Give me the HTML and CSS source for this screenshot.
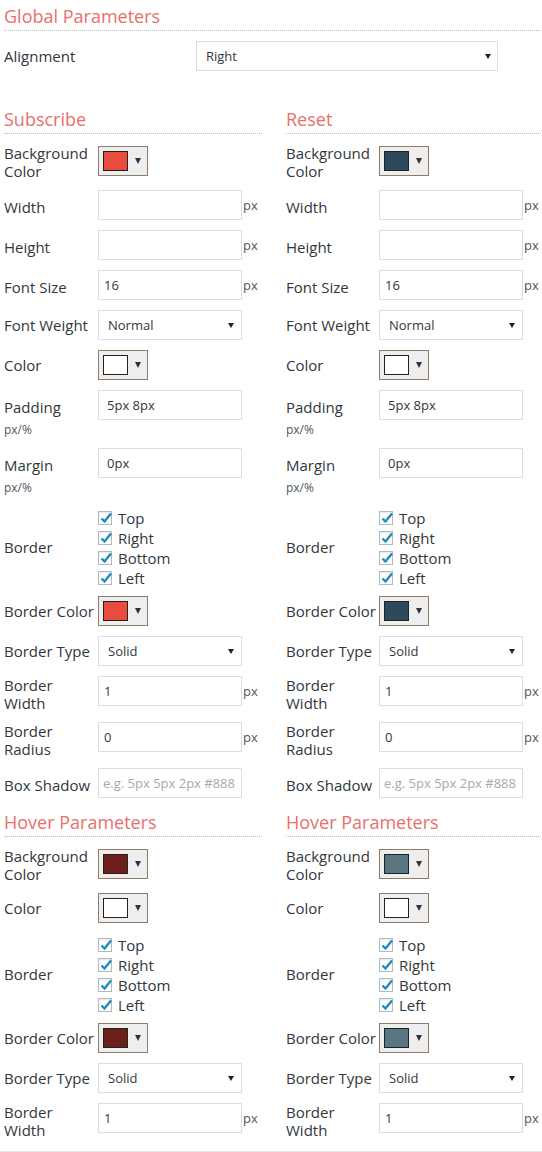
FILE: index.html
```html
<!DOCTYPE html>
<html lang="en">
<head>
    <meta charset="UTF-8">
    <meta name="viewport" content="width=device-width, initial-scale=1.0">
    <title>Button Settings</title>
    <link rel="stylesheet" href="styles.css">
</head>
<body>
    <div class="page">
        <h3 class="section-title">Global Parameters</h3>
        <div class="row global-row">
            <label class="label" for="alignment">Alignment</label>
            <div class="select-wrap wide">
                <select id="alignment" class="field select">
                    <option>Right</option>
                    <option>Left</option>
                    <option>Center</option>
                </select>
            </div>
        </div>

        <div class="columns">
            <!-- Subscribe button -->
            <div class="col">
                <h3 class="section-title">Subscribe</h3>

                <div class="row">
                    <div class="label two">Background<br>Color</div>
                    <button class="color-btn" type="button"><span class="swatch red"></span><span class="caret"></span></button>
                </div>
                <div class="row text-row">
                    <label class="label">Width</label>
                    <input class="field" type="text">
                    <span class="unit">px</span>
                </div>
                <div class="row text-row">
                    <label class="label">Height</label>
                    <input class="field" type="text">
                    <span class="unit">px</span>
                </div>
                <div class="row text-row">
                    <label class="label">Font Size</label>
                    <input class="field" type="text" value="16">
                    <span class="unit">px</span>
                </div>
                <div class="row">
                    <label class="label">Font Weight</label>
                    <div class="select-wrap">
                        <select class="field select">
                            <option>Normal</option>
                            <option>Bold</option>
                        </select>
                    </div>
                </div>
                <div class="row">
                    <div class="label">Color</div>
                    <button class="color-btn" type="button"><span class="swatch white"></span><span class="caret"></span></button>
                </div>
                <div class="row text-row">
                    <label class="label">Padding<small class="note">px/%</small></label>
                    <input class="field spaced" type="text" value="5px 8px">
                </div>
                <div class="row text-row">
                    <label class="label">Margin<small class="note">px/%</small></label>
                    <input class="field spaced" type="text" value="0px">
                </div>
                <div class="row checks-row">
                    <div class="label">Border</div>
                    <div class="checks">
                        <label class="check"><span class="box"><svg width="16" height="16" viewBox="0 0 16 16"><path d="M3.5 8.5 L6.5 11.5 L13 3.5" fill="none" stroke="#1e8cbe" stroke-width="2.4"/></svg></span>Top</label>
                        <label class="check"><span class="box"><svg width="16" height="16" viewBox="0 0 16 16"><path d="M3.5 8.5 L6.5 11.5 L13 3.5" fill="none" stroke="#1e8cbe" stroke-width="2.4"/></svg></span>Right</label>
                        <label class="check"><span class="box"><svg width="16" height="16" viewBox="0 0 16 16"><path d="M3.5 8.5 L6.5 11.5 L13 3.5" fill="none" stroke="#1e8cbe" stroke-width="2.4"/></svg></span>Bottom</label>
                        <label class="check"><span class="box"><svg width="16" height="16" viewBox="0 0 16 16"><path d="M3.5 8.5 L6.5 11.5 L13 3.5" fill="none" stroke="#1e8cbe" stroke-width="2.4"/></svg></span>Left</label>
                    </div>
                </div>
                <div class="row">
                    <div class="label">Border Color</div>
                    <button class="color-btn" type="button"><span class="swatch red"></span><span class="caret"></span></button>
                </div>
                <div class="row">
                    <label class="label">Border Type</label>
                    <div class="select-wrap">
                        <select class="field select">
                            <option>Solid</option>
                            <option>Dashed</option>
                            <option>Dotted</option>
                        </select>
                    </div>
                </div>
                <div class="row text-row">
                    <label class="label two">Border<br>Width</label>
                    <input class="field" type="text" value="1">
                    <span class="unit">px</span>
                </div>
                <div class="row text-row">
                    <label class="label two">Border<br>Radius</label>
                    <input class="field" type="text" value="0">
                    <span class="unit">px</span>
                </div>
                <div class="row text-row">
                    <label class="label">Box Shadow</label>
                    <input class="field tight" type="text" placeholder="e.g. 5px 5px 2px #888">
                </div>

                <h3 class="section-title sub">Hover Parameters</h3>

                <div class="row">
                    <div class="label two">Background<br>Color</div>
                    <button class="color-btn" type="button"><span class="swatch maroon"></span><span class="caret"></span></button>
                </div>
                <div class="row">
                    <div class="label">Color</div>
                    <button class="color-btn" type="button"><span class="swatch white"></span><span class="caret"></span></button>
                </div>
                <div class="row checks-row">
                    <div class="label">Border</div>
                    <div class="checks">
                        <label class="check"><span class="box"><svg width="16" height="16" viewBox="0 0 16 16"><path d="M3.5 8.5 L6.5 11.5 L13 3.5" fill="none" stroke="#1e8cbe" stroke-width="2.4"/></svg></span>Top</label>
                        <label class="check"><span class="box"><svg width="16" height="16" viewBox="0 0 16 16"><path d="M3.5 8.5 L6.5 11.5 L13 3.5" fill="none" stroke="#1e8cbe" stroke-width="2.4"/></svg></span>Right</label>
                        <label class="check"><span class="box"><svg width="16" height="16" viewBox="0 0 16 16"><path d="M3.5 8.5 L6.5 11.5 L13 3.5" fill="none" stroke="#1e8cbe" stroke-width="2.4"/></svg></span>Bottom</label>
                        <label class="check"><span class="box"><svg width="16" height="16" viewBox="0 0 16 16"><path d="M3.5 8.5 L6.5 11.5 L13 3.5" fill="none" stroke="#1e8cbe" stroke-width="2.4"/></svg></span>Left</label>
                    </div>
                </div>
                <div class="row">
                    <div class="label">Border Color</div>
                    <button class="color-btn" type="button"><span class="swatch maroon"></span><span class="caret"></span></button>
                </div>
                <div class="row">
                    <label class="label">Border Type</label>
                    <div class="select-wrap">
                        <select class="field select">
                            <option>Solid</option>
                            <option>Dashed</option>
                            <option>Dotted</option>
                        </select>
                    </div>
                </div>
                <div class="row text-row">
                    <label class="label two">Border<br>Width</label>
                    <input class="field" type="text" value="1">
                    <span class="unit">px</span>
                </div>
            </div>

            <!-- Reset button -->
            <div class="col right">
                <h3 class="section-title">Reset</h3>

                <div class="row">
                    <div class="label two">Background<br>Color</div>
                    <button class="color-btn" type="button"><span class="swatch slate"></span><span class="caret"></span></button>
                </div>
                <div class="row text-row">
                    <label class="label">Width</label>
                    <input class="field" type="text">
                    <span class="unit">px</span>
                </div>
                <div class="row text-row">
                    <label class="label">Height</label>
                    <input class="field" type="text">
                    <span class="unit">px</span>
                </div>
                <div class="row text-row">
                    <label class="label">Font Size</label>
                    <input class="field" type="text" value="16">
                    <span class="unit">px</span>
                </div>
                <div class="row">
                    <label class="label">Font Weight</label>
                    <div class="select-wrap">
                        <select class="field select">
                            <option>Normal</option>
                            <option>Bold</option>
                        </select>
                    </div>
                </div>
                <div class="row">
                    <div class="label">Color</div>
                    <button class="color-btn" type="button"><span class="swatch white"></span><span class="caret"></span></button>
                </div>
                <div class="row text-row">
                    <label class="label">Padding<small class="note">px/%</small></label>
                    <input class="field spaced" type="text" value="5px 8px">
                </div>
                <div class="row text-row">
                    <label class="label">Margin<small class="note">px/%</small></label>
                    <input class="field spaced" type="text" value="0px">
                </div>
                <div class="row checks-row">
                    <div class="label">Border</div>
                    <div class="checks">
                        <label class="check"><span class="box"><svg width="16" height="16" viewBox="0 0 16 16"><path d="M3.5 8.5 L6.5 11.5 L13 3.5" fill="none" stroke="#1e8cbe" stroke-width="2.4"/></svg></span>Top</label>
                        <label class="check"><span class="box"><svg width="16" height="16" viewBox="0 0 16 16"><path d="M3.5 8.5 L6.5 11.5 L13 3.5" fill="none" stroke="#1e8cbe" stroke-width="2.4"/></svg></span>Right</label>
                        <label class="check"><span class="box"><svg width="16" height="16" viewBox="0 0 16 16"><path d="M3.5 8.5 L6.5 11.5 L13 3.5" fill="none" stroke="#1e8cbe" stroke-width="2.4"/></svg></span>Bottom</label>
                        <label class="check"><span class="box"><svg width="16" height="16" viewBox="0 0 16 16"><path d="M3.5 8.5 L6.5 11.5 L13 3.5" fill="none" stroke="#1e8cbe" stroke-width="2.4"/></svg></span>Left</label>
                    </div>
                </div>
                <div class="row">
                    <div class="label">Border Color</div>
                    <button class="color-btn" type="button"><span class="swatch slate"></span><span class="caret"></span></button>
                </div>
                <div class="row">
                    <label class="label">Border Type</label>
                    <div class="select-wrap">
                        <select class="field select">
                            <option>Solid</option>
                            <option>Dashed</option>
                            <option>Dotted</option>
                        </select>
                    </div>
                </div>
                <div class="row text-row">
                    <label class="label two">Border<br>Width</label>
                    <input class="field" type="text" value="1">
                    <span class="unit">px</span>
                </div>
                <div class="row text-row">
                    <label class="label two">Border<br>Radius</label>
                    <input class="field" type="text" value="0">
                    <span class="unit">px</span>
                </div>
                <div class="row text-row">
                    <label class="label">Box Shadow</label>
                    <input class="field tight" type="text" placeholder="e.g. 5px 5px 2px #888">
                </div>

                <h3 class="section-title sub">Hover Parameters</h3>

                <div class="row">
                    <div class="label two">Background<br>Color</div>
                    <button class="color-btn" type="button"><span class="swatch steel"></span><span class="caret"></span></button>
                </div>
                <div class="row">
                    <div class="label">Color</div>
                    <button class="color-btn" type="button"><span class="swatch white"></span><span class="caret"></span></button>
                </div>
                <div class="row checks-row">
                    <div class="label">Border</div>
                    <div class="checks">
                        <label class="check"><span class="box"><svg width="16" height="16" viewBox="0 0 16 16"><path d="M3.5 8.5 L6.5 11.5 L13 3.5" fill="none" stroke="#1e8cbe" stroke-width="2.4"/></svg></span>Top</label>
                        <label class="check"><span class="box"><svg width="16" height="16" viewBox="0 0 16 16"><path d="M3.5 8.5 L6.5 11.5 L13 3.5" fill="none" stroke="#1e8cbe" stroke-width="2.4"/></svg></span>Right</label>
                        <label class="check"><span class="box"><svg width="16" height="16" viewBox="0 0 16 16"><path d="M3.5 8.5 L6.5 11.5 L13 3.5" fill="none" stroke="#1e8cbe" stroke-width="2.4"/></svg></span>Bottom</label>
                        <label class="check"><span class="box"><svg width="16" height="16" viewBox="0 0 16 16"><path d="M3.5 8.5 L6.5 11.5 L13 3.5" fill="none" stroke="#1e8cbe" stroke-width="2.4"/></svg></span>Left</label>
                    </div>
                </div>
                <div class="row">
                    <div class="label">Border Color</div>
                    <button class="color-btn" type="button"><span class="swatch steel"></span><span class="caret"></span></button>
                </div>
                <div class="row">
                    <label class="label">Border Type</label>
                    <div class="select-wrap">
                        <select class="field select">
                            <option>Solid</option>
                            <option>Dashed</option>
                            <option>Dotted</option>
                        </select>
                    </div>
                </div>
                <div class="row text-row">
                    <label class="label two">Border<br>Width</label>
                    <input class="field" type="text" value="1">
                    <span class="unit">px</span>
                </div>
            </div>
        </div>
    </div>
    <div class="footer-line"></div>
</body>
</html>
```

FILE: styles.css
```css
body {
    margin: 0;
    font-family: "Open Sans", "Liberation Sans", Arial, sans-serif;
    color: #32373c;
    background-color: #fff;
}

.page {
    width: 537px;
    padding-left: 4px;
}

.section-title {
    margin: 0;
    padding: 4px 0 2px;
    font-size: 18px;
    line-height: 24px;
    font-weight: 400;
    color: #e8706a;
    border-bottom: 1px dotted #bbb;
}

.section-title.sub {
    padding-top: 2px;
}

.col .section-title {
    margin-bottom: 10px;
}

.columns {
    display: grid;
    grid-template-columns: 258px 255px;
    column-gap: 24px;
    margin-top: 32px;
}

/* rows: label on the left, control beside it */
.row {
    display: flex;
    align-items: flex-start;
    margin-bottom: 10px;
}

.label {
    flex: none;
    width: 94px;
    padding-top: 6px;
    font-size: 15px;
    line-height: 18px;
    white-space: nowrap;
}

.col.right .label {
    width: 93px;
}

.text-row .label {
    padding-top: 8px;
}

.label.two,
.text-row .label.two {
    padding-top: 0;
}

.label.two + .color-btn {
    margin-top: 2px;
}

.label .note {
    display: block;
    margin-top: 6px;
    font-size: 12px;
    line-height: 16px;
    color: #50575e;
}

.global-row {
    align-items: center;
    margin-top: 10px;
    margin-bottom: 0;
}

.global-row .label {
    width: 192px;
    padding-top: 0;
}

/* inputs and selects */
.field {
    box-sizing: border-box;
    width: 144px;
    height: 30px;
    margin: 0;
    padding: 0 5px;
    border: 1px solid #ddd;
    border-radius: 0;
    background-color: #fff;
    font-family: "Open Sans", "Liberation Sans", Arial, sans-serif;
    font-size: 13px;
    color: #32373c;
    outline: none;
}

.field.spaced {
    padding-left: 8px;
}

.field.tight {
    padding-left: 4px;
}

.field::placeholder {
    color: #a7aaad;
}

.select-wrap {
    position: relative;
}

.select {
    appearance: none;
    -webkit-appearance: none;
    padding: 0 20px 0 9px;
}

.select-wrap.wide .select {
    width: 302px;
}

.select-wrap::after {
    content: "";
    position: absolute;
    right: 8px;
    top: 13px;
    border-left: 3px solid transparent;
    border-right: 3px solid transparent;
    border-top: 5px solid #222;
    pointer-events: none;
}

.select-wrap.wide::after {
    right: 7px;
}

.unit {
    padding-left: 1px;
    font-size: 13px;
    line-height: 30px;
    color: #555;
}

/* colour picker buttons */
.color-btn {
    box-sizing: border-box;
    display: flex;
    align-items: center;
    width: 50px;
    height: 30px;
    margin: 0;
    padding: 0 0 0 4px;
    border: 1px solid #927b65;
    border-radius: 0;
    background-color: #eee;
}

.swatch {
    box-sizing: border-box;
    width: 25px;
    height: 20px;
    border: 1px solid #222;
}

.swatch.red { background-color: #e74c3c; }
.swatch.slate { background-color: #2d4a5c; }
.swatch.maroon { background-color: #6c1e18; }
.swatch.steel { background-color: #587783; }
.swatch.white { background-color: #fff; }

.caret {
    margin-left: 7px;
    border-left: 3px solid transparent;
    border-right: 3px solid transparent;
    border-top: 6px solid #333;
}

/* border side checkboxes */
.checks-row {
    align-items: center;
    margin-bottom: 8px;
}

.checks-row .label {
    padding-top: 0;
}

.checks {
    padding-top: 2px;
}

.check {
    display: flex;
    align-items: center;
    height: 20px;
    font-size: 15px;
}

.box {
    position: relative;
    box-sizing: border-box;
    width: 14px;
    height: 14px;
    margin-right: 6px;
    border: 1px solid #b4b9be;
    background-color: #fff;
    box-shadow: inset 0 1px 2px rgba(0, 0, 0, 0.1);
}

.box svg {
    position: absolute;
    left: -1px;
    top: -2px;
}

.footer-line {
    margin-top: 2px;
    border-top: 1px solid #e5e5e5;
}
```
